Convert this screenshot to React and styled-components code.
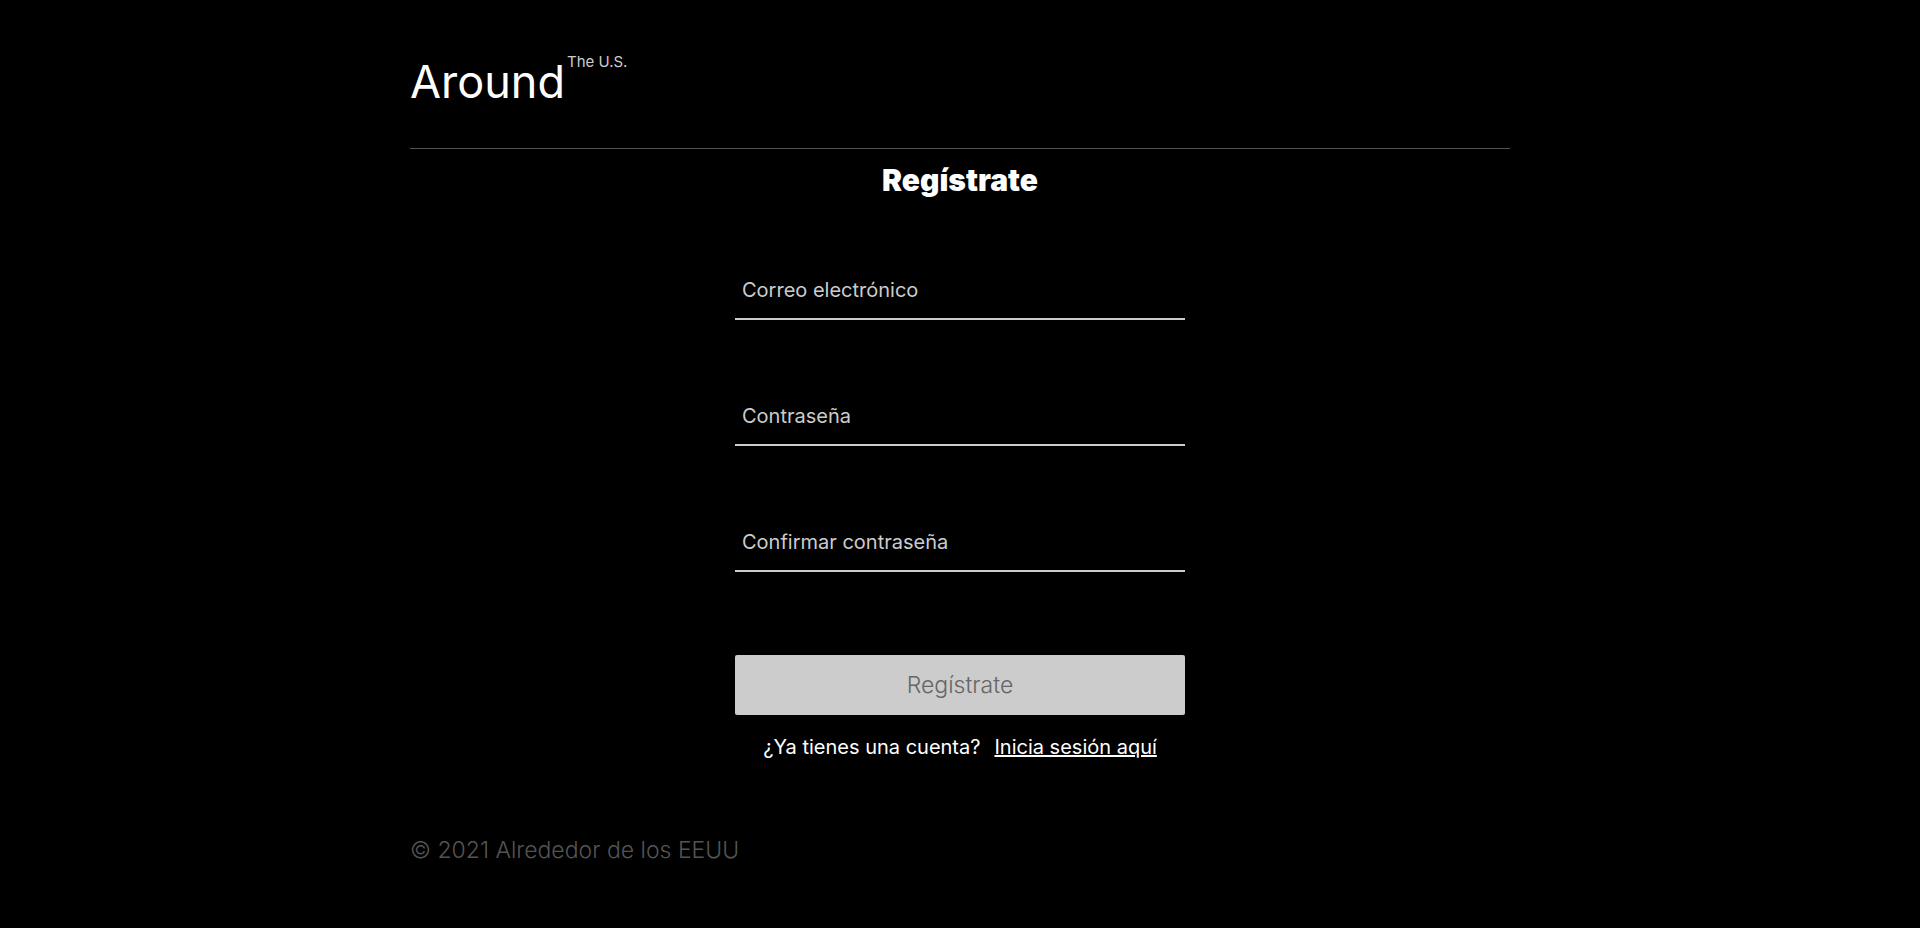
import React from "react";
import styled, { createGlobalStyle } from "styled-components";

const GlobalStyle = createGlobalStyle`
  *, *::before, *::after { box-sizing: border-box; }
  body { margin: 0; background: #000; color: #fff; font-family: Inter, "Liberation Sans", sans-serif; }
`;
const Page = styled.div`
  min-height: 100vh;
  max-width: 1100px;
  margin: 0 auto;
`;
const Header = styled.header`
  padding: 52px 0 44px;
  border-bottom: 1px solid #545454;
`;
const Logo = styled.a`
  display: flex;
  align-items: flex-start;
  gap: 2px;
  height: 52px;
  color: #fff;
  text-decoration: none;
`;
const LogoName = styled.span`
  font-size: 45px;
  line-height: 60px;
`;
const LogoTag = styled.span`
  font-size: 15px;
  line-height: 20px;
  color: #ccc;
`;
const Form = styled.form`
  display: flex;
  flex-direction: column;
  width: 100%;
  max-width: 450px;
  margin: 0 auto;
`;
const Title = styled.h1`
  margin: 11px 0 62px;
  font-size: 30px;
  line-height: 40px;
  font-weight: 900;
  text-align: center;
`;
const Field = styled.input`
  height: 58px;
  margin-bottom: 68px;
  padding: 0 7px;
  border: 0;
  border-bottom: 2px solid #ccc;
  border-radius: 0;
  background: transparent;
  color: #fff;
  font: inherit;
  font-size: 20px;
  outline: 0;
  &::placeholder { color: #ccc; opacity: 1; }
`;
const Submit = styled.button`
  height: 60px;
  margin-top: 15px;
  border: 0;
  border-radius: 2px;
  background: #ccc;
  color: #666;
  font: inherit;
  font-size: 23px;
  font-weight: 300;
`;
const Prompt = styled.p`
  display: flex;
  justify-content: center;
  gap: 14px;
  margin: 20px 0 0;
  font-size: 20px;
  line-height: 24px;
`;
const PromptLink = styled.a`
  color: #fff;
`;
const Footer = styled.footer`
  padding: 76px 0 60px;
  color: #545454;
  font-size: 23px;
  line-height: 30px;
  font-weight: 300;
`;

export default function App() {
  return (
    <>
      <GlobalStyle />
      <Page>
        <Header>
          <Logo href="#"><LogoName>Around</LogoName><LogoTag>The U.S.</LogoTag></Logo>
        </Header>
        <main>
          <Form>
            <Title>Regístrate</Title>
            <Field type="email" aria-label="Correo electrónico" placeholder="Correo electrónico" />
            <Field type="password" aria-label="Contraseña" placeholder="Contraseña" />
            <Field type="password" aria-label="Confirmar contraseña" placeholder="Confirmar contraseña" />
            <Submit type="submit" disabled>Regístrate</Submit>
            <Prompt>¿Ya tienes una cuenta? <PromptLink href="#">Inicia sesión aquí</PromptLink></Prompt>
          </Form>
        </main>
        <Footer>© 2021 Alrededor de los EEUU</Footer>
      </Page>
    </>
  );
}
